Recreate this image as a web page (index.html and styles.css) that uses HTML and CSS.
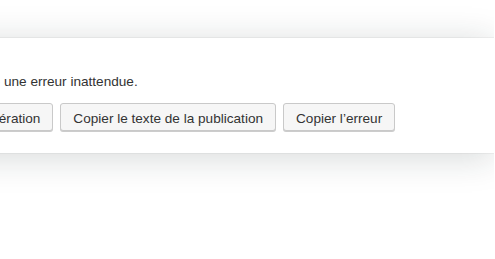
FILE: index.html
```html
<!DOCTYPE html>
<html lang="fr">
  <head>
    <meta charset="UTF-8" />
    <title>erreur</title>
    <link rel="stylesheet" href="styles.css">
  </head>
  <body>
    <div class="stage">
      <div class="notice">
        <p class="message">L’export a rencontré une erreur inattendue.</p>
        <div class="actions">
          <button class="btn">Réessayer la génération</button>
          <button class="btn">Copier le texte de la publication</button>
          <button class="btn">Copier l’erreur</button>
        </div>
      </div>
    </div>
  </body>
</html>
```
FILE: styles.css
```css
body {
  margin: 0;
  background: #fff;
  font-family: "Liberation Sans", Arial, sans-serif;
}
.stage {
  width: 494px;
  overflow: hidden;
  padding: 38px 0 40px;
}
.notice {
  margin-left: -140px;
  padding: 20px 20px 22px 20px;
  background: #fff;
  box-shadow: 0 4px 34px rgba(20, 40, 40, 0.18), 0 0 0 1px rgba(0, 0, 0, 0.04);
  font-size: 13.6px;
  color: #333;
}
.message {
  margin: 14px 0 11px;
  line-height: 20px;
}
.actions {
  display: flex;
  gap: 7px;
}
.btn {
  height: 28px;
  padding: 2px 12px 0;
  border: 1px solid #c9c9c9;
  border-radius: 3px;
  background: #f6f6f6;
  box-shadow: 0 1px 0 #ccc;
  font: 13.6px "Liberation Sans", Arial, sans-serif;
  color: #333;
}
```
